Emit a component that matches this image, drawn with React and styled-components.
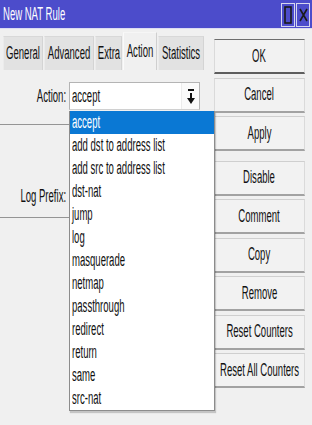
import React from 'react';
import styled, { createGlobalStyle } from "styled-components";

const GlobalStyle = createGlobalStyle`
  html, body {
    margin: 0;
    padding: 0;
    background: #f0f0f0;
  }
  body {
    font-family: "Liberation Sans", Arial, sans-serif;
    font-size: 18px;
  }
`;

const Window = styled.div`
  width: 312px;
  height: 425px;
  display: flex;
  flex-direction: column;
  background: #f0f0f0;
  overflow: hidden;
`;

const TitleBar = styled.div`
  height: 28px;
  flex: none;
  display: flex;
  align-items: center;
  background: #4c4ccb;
  padding-left: 3px;
  border-bottom: 1px solid #dcdcf2;
`;

const TitleText = styled.div`
  flex: 1;
  color: #ffffff;
  font-size: 18px;
`;

const WinButtons = styled.div`
  display: flex;
  gap: 1px;
  margin-right: 2px;
  align-self: flex-start;
  margin-top: 3px;
`;

const WinButton = styled.div`
  width: 12px;
  height: 22px;
  border: 1px solid #d6d6ee;
  display: flex;
  align-items: center;
  justify-content: center;
`;

// squeezed text, the screenshot is narrow
const Text = styled.span`
  display: inline-block;
  flex: none;
  white-space: nowrap;
  transform: scaleX(${p => p.$scale || 0.53});
  transform-origin: ${p => p.$origin || "left"} center;
`;

const Body = styled.div`
  flex: 1;
  display: flex;
`;

const LeftPane = styled.div`
  width: 211px;
  flex: none;
  display: flex;
  flex-direction: column;
`;

const TabRow = styled.div`
  display: flex;
  align-items: flex-end;
  gap: 1px;
  height: 41px;
  padding-left: 3px;
`;

const Tab = styled.div`
  width: ${p => p.$w}px;
  height: ${p => (p.$active ? 38 : 34)}px;
  box-sizing: border-box;
  display: flex;
  align-items: center;
  justify-content: center;
  color: #111;
  background: ${p => (p.$active ? "#f0f0f0" : "#e2e2e2")};
  border-top: 1px solid ${p => (p.$active ? "#f6f6f6" : "#d8d8d8")};
  border-left: 1px solid ${p => (p.$active ? "#fafafa" : "#ebebeb")};
  border-right: 1px solid ${p => (p.$active ? "#cfcfcf" : "#d4d4d4")};
`;

const Panel = styled.div`
  position: relative;
  flex: 1;
  padding-top: 12px;
`;

const FormRow = styled.div`
  display: grid;
  grid-template-columns: 66px 131px;
  column-gap: 3px;
  align-items: center;
  height: 28px;
  margin-top: ${p => p.$top || 0}px;
`;

const Label = styled.div`
  display: flex;
  justify-content: flex-end;
  color: #111;
`;

const Select = styled.div`
  height: 28px;
  box-sizing: border-box;
  display: flex;
  background: #ffffff;
  border: 1px solid #b4b4b4;
  border-bottom-color: #d0d0d0;
`;

const SelectValue = styled.div`
  flex: 1;
  display: flex;
  align-items: center;
  padding-left: 2px;
  color: #111;
`;

const SelectArrow = styled.div`
  width: 17px;
  display: flex;
  align-items: center;
  justify-content: center;
  background: #fafafa;
  border-left: 1px solid #ececec;
`;

const Separator = styled.div`
  height: 1px;
  flex: none;
  background: #959595;
  margin-top: ${p => p.$top}px;
`;

const DropList = styled.ul`
  position: absolute;
  left: 69px;
  top: 41px;
  width: 144px;
  margin: 0;
  padding: 0;
  list-style: none;
  background: #ffffff;
  border: 1px solid #8c8c8c;
  border-top: none;
  box-shadow: 1px 2px 1px rgba(0, 0, 0, 0.18);
`;

const DropItem = styled.li`
  height: 23px;
  display: flex;
  align-items: center;
  padding-left: 2px;
  color: ${p => (p.$selected ? "#ffffff" : "#111")};
  background: ${p => (p.$selected ? "#0a78d4" : "transparent")};
`;

const ButtonColumn = styled.div`
  width: 91px;
  margin-left: 3px;
  padding-top: 10px;
  display: flex;
  flex-direction: column;
  gap: 3.5px;
`;

const Button = styled.div`
  height: 35px;
  box-sizing: border-box;
  display: flex;
  align-items: center;
  justify-content: center;
  color: #111;
  background: #f2f2f2;
  border: 1px solid #dadada;
  border-top-color: ${p => (p.$default ? "#6e6e6e" : "#cfcfcf")};
  border-bottom: 2px solid ${p => (p.$default ? "#5e5e5e" : "#a2a2a2")};
  margin-top: ${p => p.$extra || 0}px;
`;

const tabs = [
  { name: "General", w: 40 },
  { name: "Advanced", w: 50 },
  { name: "Extra", w: 27 },
  { name: "Action", w: 34, active: true },
  { name: "Statistics", w: 46 },
];

const actions = [
  "accept",
  "add dst to address list",
  "add src to address list",
  "dst-nat",
  "jump",
  "log",
  "masquerade",
  "netmap",
  "passthrough",
  "redirect",
  "return",
  "same",
  "src-nat",
];

const buttons = [
  { label: "OK", isDefault: true },
  { label: "Cancel" },
  { label: "Apply" },
  { label: "Disable", extra: 6 },
  { label: "Comment" },
  { label: "Copy" },
  { label: "Remove" },
  { label: "Reset Counters" },
  { label: "Reset All Counters" },
];

const MaximizeIcon = () => (
  <svg width="8" height="18" viewBox="0 0 8 18">
    <rect x="1" y="1" width="6" height="16" fill="none" stroke="#1a1a1a" strokeWidth="1.6" />
  </svg>
);

const CloseIcon = () => (
  <svg width="9" height="14" viewBox="0 0 9 14">
    <path d="M1 1 L8 13 M8 1 L1 13" stroke="#1a1a1a" strokeWidth="1.6" fill="none" />
  </svg>
);

const DropArrow = () => (
  <svg width="8" height="15" viewBox="0 0 8 15">
    <rect x="1" y="0" width="6" height="2" fill="#111" />
    <rect x="3" y="4" width="2" height="6" fill="#111" />
    <path d="M0 9 L8 9 L4 15 Z" fill="#111" />
  </svg>
);

export default function App() {
  return (
    <Window>
      <GlobalStyle />
      <TitleBar>
        <TitleText><Text>New NAT Rule</Text></TitleText>
        <WinButtons>
          <WinButton><MaximizeIcon /></WinButton>
          <WinButton><CloseIcon /></WinButton>
        </WinButtons>
      </TitleBar>
      <Body>
        <LeftPane>
          <TabRow>
            {tabs.map(t => (
              <Tab key={t.name} $w={t.w} $active={t.active}>
                <Text $origin="center">{t.name}</Text>
              </Tab>
            ))}
          </TabRow>
          <Panel>
            <FormRow>
              <Label><Text $origin="right">Action:</Text></Label>
              <Select>
                <SelectValue><Text>accept</Text></SelectValue>
                <SelectArrow><DropArrow /></SelectArrow>
              </Select>
            </FormRow>
            <Separator $top={14} />
            <FormRow $top={57}>
              <Label><Text $origin="right">Log Prefix:</Text></Label>
              <div />
            </FormRow>
            <Separator $top={7} />
            <DropList>
              {actions.map((a, i) => (
                <DropItem key={a} $selected={i === 0}>
                  <Text>{a}</Text>
                </DropItem>
              ))}
            </DropList>
          </Panel>
        </LeftPane>
        <ButtonColumn>
          {buttons.map(b => (
            <Button key={b.label} $default={b.isDefault} $extra={b.extra}>
              <Text $origin="center">{b.label}</Text>
            </Button>
          ))}
        </ButtonColumn>
      </Body>
    </Window>
  );
}
